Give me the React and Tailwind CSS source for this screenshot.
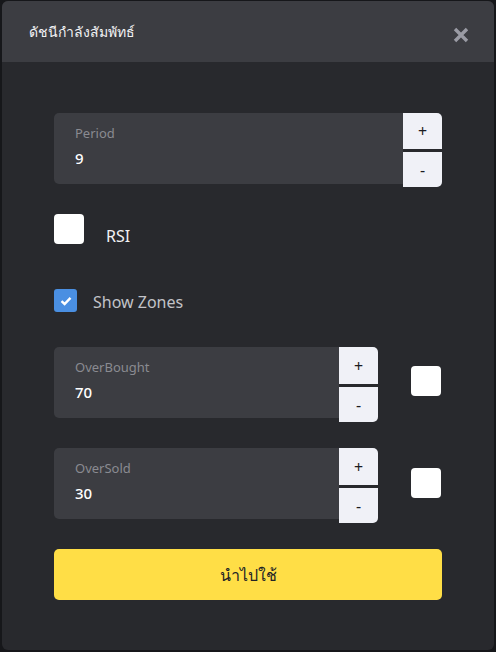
import { useState } from "react";

const font = { fontFamily: '"Noto Sans", "Open Sans", "DejaVu Sans", sans-serif' };

function Stepper({ label, value, inputW, btnH }) {
  return (
    <div className="flex items-start">
      <div className={`${inputW} h-[71px] rounded-l-[5px] bg-[#3c3d42] pl-[21px] pt-[10px]`}>
        <div className="text-[13px] leading-[20px] text-[#8a8b91]">{label}</div>
        <div className="mt-[5px] text-[15px] font-medium leading-[20px] text-white">{value}</div>
      </div>
      <div className="flex w-[39px] flex-col gap-[3px]">
        <button className={`flex ${btnH[0]} items-center justify-center rounded-tr-[5px] bg-[#f0f1f7] text-[16px] text-[#1b1c22]`}>
          +
        </button>
        <button className={`flex ${btnH[1]} items-center justify-center rounded-br-[5px] bg-[#f0f1f7] text-[16px] text-[#1b1c22]`}>
          -
        </button>
      </div>
    </div>
  );
}

export default function App() {
  const [zones, setZones] = useState(true);
  return (
    <div className="h-[652px] w-[496px] bg-[#16171a] pl-[2px] pt-[1px]" style={font}>
      <div className="flex h-[649px] w-[492px] flex-col overflow-hidden rounded-[6px] bg-[#28292d]">
        {/* header */}
        <div className="flex h-[61px] shrink-0 items-center justify-between bg-[#3c3d42] pl-[27px] pr-[24px]">
          <span className="text-[14px] leading-[20px] text-[#f2f2f4]">ดัชนีกำลังสัมพัทธ์</span>
          <svg width="18" height="18" viewBox="0 0 18 18" className="mt-[6px]">
            <path d="M3 3 L15 15 M15 3 L3 15" stroke="#9a9ba4" strokeWidth="3.4" strokeLinecap="butt" />
          </svg>
        </div>

        <div className="flex flex-col pl-[52px] pt-[51px]">
          <div className="w-[388px]">
            <Stepper label="Period" value="9" inputW="w-[349px]" btnH={["h-[36px]", "h-[35px]"]} />
          </div>

          <div className="mt-[27px] flex h-[30px] items-start overflow-visible">
            <div className="h-[30px] w-[30px] shrink-0 rounded-[4px] bg-white" />
            <span className="ml-[22px] mt-[10px] text-[16px] leading-[24px] text-[#f2f2f4]">RSI</span>
          </div>

          <button className="mt-[45px] flex h-[23px] items-start" onClick={() => setZones(!zones)}>
            <span className="flex h-[23px] w-[23px] shrink-0 items-center justify-center rounded-[3px] bg-[#4a8fe2]">
              {zones && (
                <svg width="12" height="10" viewBox="0 0 12 10">
                  <path d="M1.5 5.2 L4.6 8 L10.5 1.8" fill="none" stroke="white" strokeWidth="2.4" />
                </svg>
              )}
            </span>
            <span className="ml-[16px] mt-[1px] text-[16px] leading-[24px] text-[#c2c3c8]">Show Zones</span>
          </button>

          <div className="mt-[35px] flex items-center">
            <Stepper label="OverBought" value="70" inputW="w-[285px]" btnH={["h-[37px]", "h-[35px]"]} />
            <div className="ml-[33px] mb-[8px] h-[30px] w-[30px] rounded-[4px] bg-white" />
          </div>

          <div className="mt-[26px] flex items-center">
            <Stepper label="OverSold" value="30" inputW="w-[285px]" btnH={["h-[37px]", "h-[35px]"]} />
            <div className="ml-[33px] mb-[6px] h-[30px] w-[30px] rounded-[4px] bg-white" />
          </div>

          <button className="mt-[26px] flex h-[51px] w-[388px] items-center justify-center rounded-[5px] bg-[#ffde46] text-[16px] text-[#222326]">
            นำไปใช้
          </button>
        </div>
      </div>
    </div>
  );
}
